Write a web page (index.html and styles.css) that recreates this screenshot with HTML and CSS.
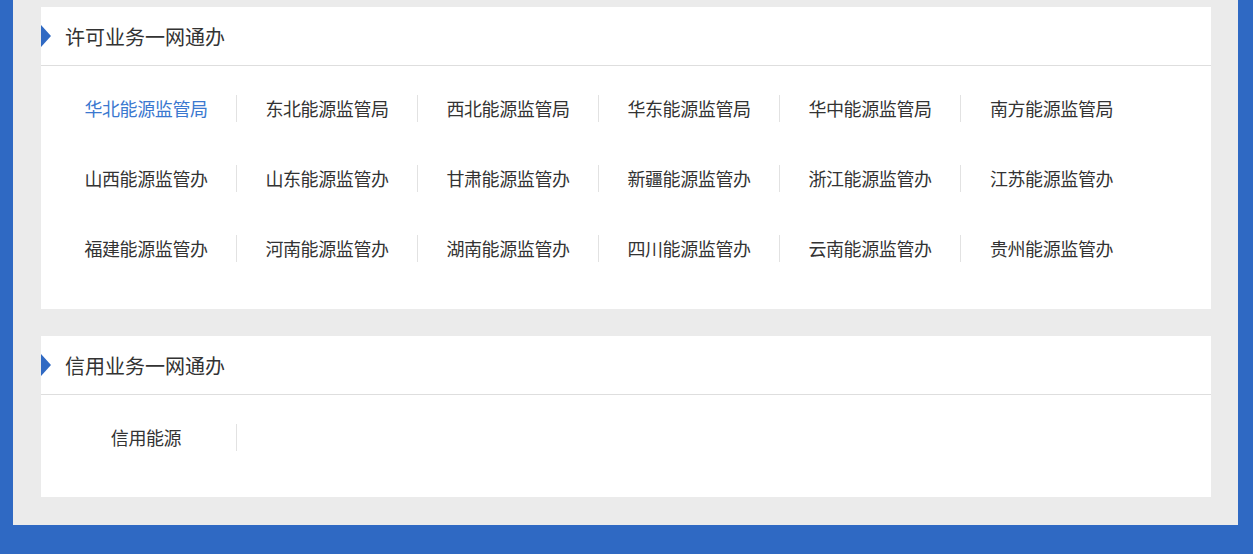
FILE: index.html
```html
<!DOCTYPE html>
<html>
<head>
	<meta charset="UTF-8">
	<title>一网通办</title>
	<link rel="stylesheet" href="styles.css">
</head>
<body>
	<div class="main_box">
		<section class="panel">
			<div class="panel_title"><span class="arrow"></span>许可业务一网通办</div>
			<ul class="org_list">
				<li class="active">华北能源监管局</li>
				<li>东北能源监管局</li>
				<li>西北能源监管局</li>
				<li>华东能源监管局</li>
				<li>华中能源监管局</li>
				<li>南方能源监管局</li>
				<li>山西能源监管办</li>
				<li>山东能源监管办</li>
				<li>甘肃能源监管办</li>
				<li>新疆能源监管办</li>
				<li>浙江能源监管办</li>
				<li>江苏能源监管办</li>
				<li>福建能源监管办</li>
				<li>河南能源监管办</li>
				<li>湖南能源监管办</li>
				<li>四川能源监管办</li>
				<li>云南能源监管办</li>
				<li>贵州能源监管办</li>
			</ul>
		</section>
		<section class="panel">
			<div class="panel_title"><span class="arrow"></span>信用业务一网通办</div>
			<ul class="org_list">
				<li>信用能源</li>
			</ul>
		</section>
	</div>
</body>
</html>
```
FILE: styles.css
```css
html, body {
	margin: 0;
	padding: 0;
}
body {
	background: #2f69c3;
	font-family: "Microsoft YaHei", "Noto Sans CJK SC", sans-serif;
	color: #333;
	height: 554px;
	overflow: hidden;
}
.main_box {
	margin: 0 15px 0 13px;
	background: #ebebeb;
	padding: 7px 27px 28px 28px;
	display: flex;
	flex-direction: column;
	gap: 27px;
}
.panel {
	background: #fff;
}
.panel_title {
	height: 58px;
	border-bottom: 1px solid #dedede;
	display: flex;
	align-items: center;
	font-size: 20px;
	color: #333;
}
.arrow {
	width: 0;
	height: 0;
	border-top: 11px solid transparent;
	border-bottom: 11px solid transparent;
	border-left: 10px solid #2f69c3;
	margin-right: 14px;
}
.org_list {
	list-style: none;
	margin: 0;
	padding: 29px 14px 46px 15px;
	display: flex;
	flex-wrap: wrap;
	row-gap: 43px;
}
.panel:first-child .org_list {
	padding-bottom: 47px;
}
.org_list li {
	width: 180px;
	height: 27px;
	line-height: 27px;
	text-align: center;
	font-size: 18px;
	letter-spacing: -0.4px;
	border-right: 1px solid #e2e2e2;
	cursor: pointer;
}
.org_list li:nth-child(6n) {
	border-right: none;
	width: 181px;
}
.org_list li.active {
	color: #3b78cf;
}
```
